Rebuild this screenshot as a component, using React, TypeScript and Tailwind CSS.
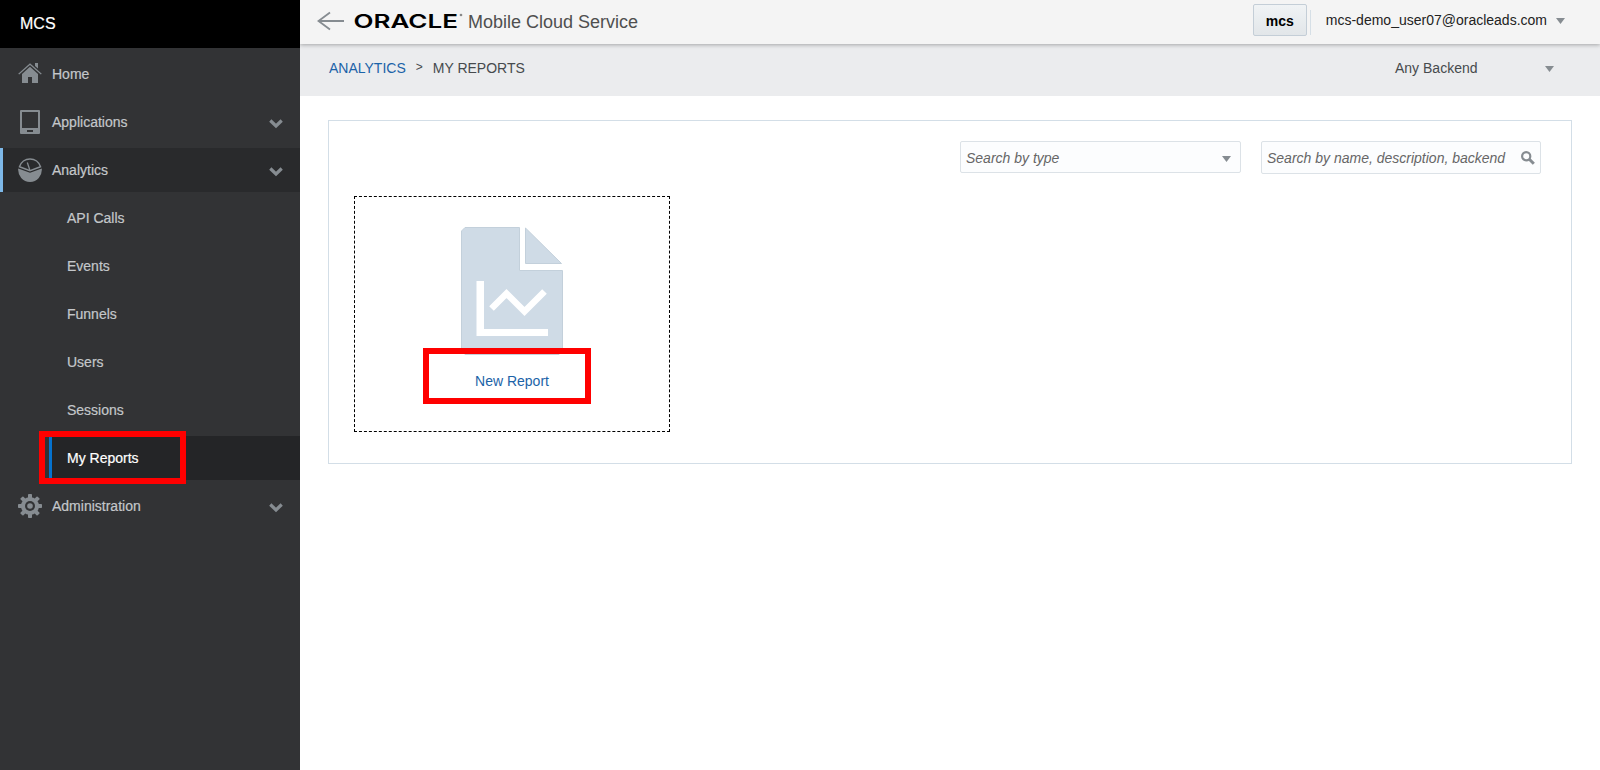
import React from "react";

const HomeIcon = () => (
  <svg width="24" height="24" viewBox="0 0 24 24" fill="#868c91">
    <path d="M0.2 11.8 12 1.200 23.800 11.800 22.800 12.600 12 3 1.200 12.600Z" />
    <path d="M17 1h3v5.600l-3-2.600Z" />
    <path d="M12 4.800 20 12V21h-6v-6h-4V21H4v-9Z" />
  </svg>
);

const TabletIcon = () => (
  <svg width="24" height="24" viewBox="0 0 24 24">
    <path
      fill="#868c91"
      fillRule="evenodd"
      d="M3 0h18a1 1 0 0 1 1 1v22a1 1 0 0 1-1 1H3a1 1 0 0 1-1-1V1a1 1 0 0 1 1-1ZM4 2v16h16V2ZM9 20v2h6v-2Z"
    />
  </svg>
);

const GaugeIcon = () => (
  <svg width="24" height="24" viewBox="0 0 24 24">
    <path d="M1.500 8.800A11 11 0 0 1 22.500 8.800L12 12.800Z" fill="none" stroke="#868c91" strokeWidth="1.500" />
    <path d="M11.800 12 9.300 4.500" stroke="#868c91" strokeWidth="1.300" />
    <path d="M0.200 10.400 12 14.800 23.800 10.400A12 12.400 0 0 1 12 24 12 12.400 0 0 1 0.200 10.400Z" fill="#868c91" />
  </svg>
);

const GearIcon = () => (
  <svg width="24" height="24" viewBox="0 0 24 24">
    <g fill="#868c91">
      <rect x="10" y="0" width="4" height="24" rx="0.800" />
      <rect x="10" y="0" width="4" height="24" rx="0.800" transform="rotate(45 12 12)" />
      <rect x="10" y="0" width="4" height="24" rx="0.800" transform="rotate(90 12 12)" />
      <rect x="10" y="0" width="4" height="24" rx="0.800" transform="rotate(135 12 12)" />
      <circle cx="12" cy="12" r="9" />
    </g>
    <circle cx="12" cy="12" r="5" fill="#323335" />
    <circle cx="12" cy="12" r="2.800" fill="#868c91" />
  </svg>
);

const Chevron = () => (
  <svg width="14" height="10" viewBox="0 0 14 10" className="mt-[4px]">
    <path d="M1.300 1.500 7 7 12.700 1.500" fill="none" stroke="#868c91" strokeWidth="3.200" />
  </svg>
);

const Caret = () => (
  <svg width="9" height="6" viewBox="0 0 9 6" className="block shrink-0">
    <path d="M0 0h9L4.500 6Z" fill="#868c91" />
  </svg>
);

type TopItemProps = {
  icon: React.ReactNode;
  label: string;
  expandable?: boolean;
  active?: boolean;
};

function TopItem({ icon, label, expandable, active }: TopItemProps) {
  return (
    <div
      className={
        active
          ? "flex h-11 items-center border-l-[3px] border-[#7db8e8] bg-[#292a2c] pl-[15px] pr-[17px]"
          : "flex h-11 items-center pl-[18px] pr-[17px]"
      }
    >
      {icon}
      <span className="ml-[10px] flex-1">{label}</span>
      {expandable && <Chevron />}
    </div>
  );
}

const subItems = ["API Calls", "Events", "Funnels", "Users", "Sessions"];

function Sidebar() {
  return (
    <aside className="flex w-[300px] shrink-0 flex-col bg-[#323335] text-[#c4c7ca] [-webkit-text-stroke:0.2px]">
      <div className="flex h-12 items-center bg-black pl-5 text-base text-white">MCS</div>
      <nav className="flex flex-col gap-1 pt-1">
        <TopItem icon={<HomeIcon />} label="Home" />
        <TopItem icon={<TabletIcon />} label="Applications" expandable />
        <TopItem icon={<GaugeIcon />} label="Analytics" expandable active />
        {subItems.map((item) => (
          <div key={item} className="flex h-11 items-center pl-[67px]">
            {item}
          </div>
        ))}
        <div className="relative ml-[49px] flex h-11 items-center border-l-[3px] border-[#0572ce] bg-[#242527] pl-[15px] text-white">
          My Reports
          <div className="absolute -left-[13px] -top-[5px] h-[53px] w-[147px] border-[6px] border-[#ff0000]" />
        </div>
        <TopItem icon={<GearIcon />} label="Administration" expandable />
      </nav>
    </aside>
  );
}

function Header() {
  return (
    <header className="relative flex h-11 shrink-0 items-center bg-[#f4f4f4] pl-[17px] pr-[35px] shadow-[0_1px_4px_rgba(0,0,0,0.3)]">
      <svg width="27" height="20" viewBox="0 0 27 20" className="mt-[-2px]">
        <path d="M27 10H1.500M13 1.500 1.500 10 13 18.500" fill="none" stroke="#868c91" strokeWidth="1.800" />
      </svg>
      <div className="ml-[8px] mt-[-2px] flex w-[116px] items-center">
        <svg width="116" height="24" viewBox="0 0 116 24">
          <text
            x="1.500"
            y="19"
            textLength="104.500"
            lengthAdjust="spacingAndGlyphs"
            fontSize="19.300"
            fontWeight="600"
            fontFamily="Inter, sans-serif"
            fill="#000"
          >
            ORACLE
          </text>
          <circle cx="109" cy="6" r="1.300" fill="#888" />
        </svg>
      </div>
      <span className="mt-[-1px] text-lg text-[#4f4f4f]">Mobile Cloud Service</span>
      <div className="flex-1" />
      <button className="mt-[-4px] flex h-8 w-[54px] items-center justify-center rounded-[2px] border border-[#c4ced7] bg-linear-to-b from-[#f0f3f5] to-[#e2e6e9] pt-[2px] font-bold text-black">
        mcs
      </button>
      <div className="ml-[3px] h-[25px] w-px bg-[#d6dfe6]" />
      <span className="ml-[15px] mt-[-4px] text-[#222]">mcs-demo_user07@oracleads.com</span>
      <div className="ml-auto pb-[2px] pl-[9px]">
        <Caret />
      </div>
    </header>
  );
}

function ReportIcon() {
  return (
    <svg width="102" height="128" viewBox="0 0 102 128">
      <g fill="#cfdbe6" stroke="#c3d0db" strokeWidth="1">
        <path d="M4 .5H58.500V43.500H101.500V124L98 127.500H4L.5 124V4Z" />
        <path d="M64.500 1V36.500H100.500Z" />
      </g>
      <path d="M15.500 54h7.500v48h64v7H15.500Z" fill="#fff" />
      <path d="M30.500 81.500 45.500 66.500 63.500 84.500 83.500 64.500" fill="none" stroke="#fff" strokeWidth="6.500" />
    </svg>
  );
}

export default function App() {
  return (
    <div className="flex h-[770px] w-[1600px] overflow-hidden bg-white font-['Liberation_Sans',Arial,sans-serif] text-sm">
      <Sidebar />
      <div className="flex flex-1 flex-col">
        <Header />
        <div className="flex h-[52px] shrink-0 items-center bg-[#ebecee] pb-[4px] pl-[29px] pr-[46px] text-[#464a4d]">
          <a className="text-[#1b63a8]">ANALYTICS</a>
          <span className="ml-[10px] mt-[-3px] text-xs">&gt;</span>
          <span className="ml-[10px]">MY REPORTS</span>
          <div className="ml-auto flex w-[159px] items-center justify-between">
            <span>Any Backend</span>
            <div className="pt-[2px]">
              <Caret />
            </div>
          </div>
        </div>
        <main className="ml-7 mr-7 mt-6 flex h-[344px] flex-col border border-[#d3dee7] pl-[25px] pr-[30px] pt-5">
          <div className="flex items-start justify-end gap-5">
            <div className="flex h-8 w-[281px] items-center justify-between rounded-[2px] border border-[#dce2e7] bg-[#fcfdfe] pl-[5px] pr-[9px] pt-px italic text-[#666]">
              <span>Search by type</span>
              <div className="pt-[2px]">
                <Caret />
              </div>
            </div>
            <div className="flex h-[33px] w-[280px] items-center justify-between rounded-[2px] border border-[#dce2e7] bg-[#fcfdfe] pl-[5px] pr-[5px] italic text-[#666]">
              <span>Search by name, description, backend</span>
              <svg width="14" height="14" viewBox="0 0 14 14">
                <circle cx="5.200" cy="5.200" r="4.100" fill="none" stroke="#868c91" strokeWidth="2.200" />
                <path d="M8.300 8.300 12.800 12.800" stroke="#868c91" strokeWidth="3" />
              </svg>
            </div>
          </div>
          <div className="mt-[22px] flex h-[236px] w-[316px] flex-col items-center border border-dashed border-black pt-[30px]">
            <ReportIcon />
            <div className="relative mt-4 text-[#1b63a8]">
              New Report
              <div className="absolute -left-[52px] -top-[23px] h-[56px] w-[168px] border-[6px] border-[#ff0000]" />
            </div>
          </div>
        </main>
      </div>
    </div>
  );
}
